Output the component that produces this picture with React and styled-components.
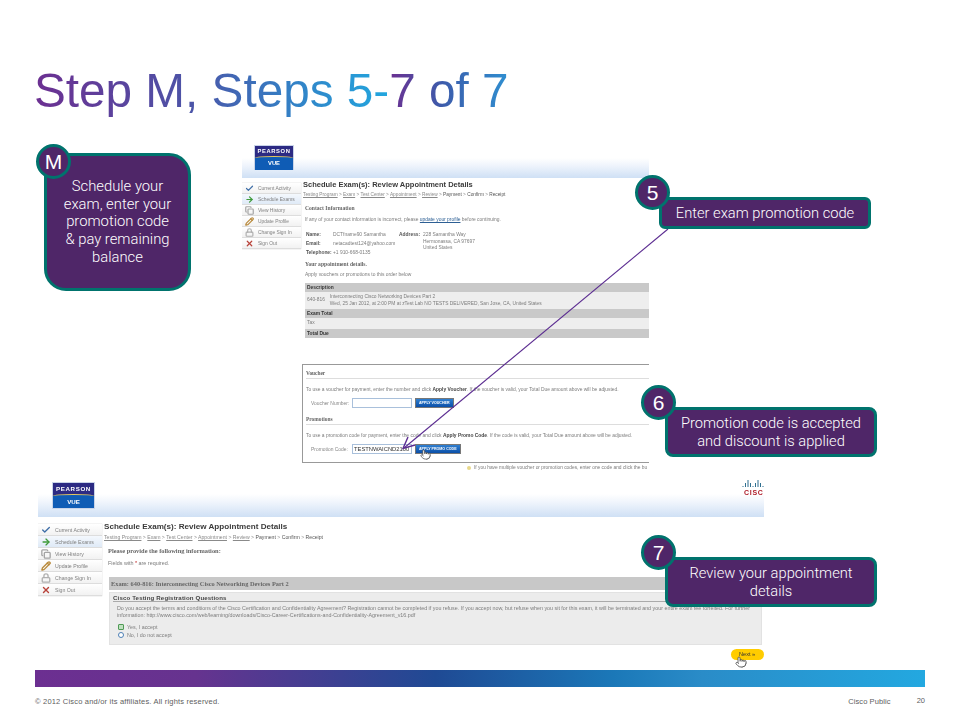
import React from "react";
import styled, { createGlobalStyle } from "styled-components";
import { Check, ArrowRight, Copy, Pencil, Lock, X, Pointer } from "lucide-react";

const GlobalStyle = createGlobalStyle`
  html, body { margin: 0; padding: 0; background: #fff; }
  body { font-family: "Liberation Sans", Arial, sans-serif; }
`;

const menu = [
  { label: "Current Activity", Icon: Check, color: "#3f6fa8" },
  { label: "Schedule Exams", Icon: ArrowRight, color: "#3f9a3a", active: true },
  { label: "View History", Icon: Copy, color: "#a5a5a5" },
  { label: "Update Profile", Icon: Pencil, color: "#b98a3c" },
  { label: "Change Sign In", Icon: Lock, color: "#b0b0b0" },
  { label: "Sign Out", Icon: X, color: "#b8433a" },
];

const Crumbs = ({ size }) => (
  <CrumbRow $size={size}>
    <u>Testing Program</u> &gt; <u>Exam</u> &gt; <u>Test Center</u> &gt; <u>Appointment</u> &gt;{" "}
    <u>Review</u> &gt; <b>Payment</b> &gt; <b>Confirm</b> &gt; <b>Receipt</b>
  </CrumbRow>
);

const SideMenu = ({ width, itemHeight, size, top }) => (
  <Menu $width={width} $top={top}>
    {menu.map(({ label, Icon, color, active }) => (
      <MenuItem key={label} $height={itemHeight} $size={size} $active={active}>
        <Icon size={itemHeight - 2} color={color} strokeWidth={3.2} />
        {label}
      </MenuItem>
    ))}
  </Menu>
);

const PearsonLogo = ({ width, height, size, top }) => (
  <Logo $width={width} $height={height} $top={top}>
    <LogoTop $size={size}>PEARSON</LogoTop>
    <LogoBottom $size={size}>VUE</LogoBottom>
  </Logo>
);

const App = () => (
  <Slide>
    <GlobalStyle />
    <Title>
      <TitleRun>Step M, Steps 5-</TitleRun>
      <TitleRun $short>7 of 7</TitleRun>
    </Title>

    <TopRow>
      <StepBox>
        <Badge>M</Badge>
        <span>
          Schedule your
          <br />
          exam, enter your
          <br />
          promotion code
          <br />
          &amp; pay remaining
          <br />
          balance
        </span>
      </StepBox>

      <ScreenOne>
        <Header $band={20} $left={12}>
          <PearsonLogo width={40} height={25} size={5.8} top={0} />
        </Header>
        <ScreenBody>
          <SideMenu width={59} itemHeight={11} size={4.9} top={5} />
          <Content>
            <PageTitle $size={7.5} $top={1}>Schedule Exam(s): Review Appointment Details</PageTitle>
            <Crumbs size={4.75} />
            <Indented>
              <SectionHead $top={5}>Contact Information</SectionHead>
              <Note $top={4}>
                If any of your contact information is incorrect, please{" "}
                <ProfileLink>update your profile</ProfileLink> before continuing.
              </Note>
              <Contact>
                <ContactColumn $columns="27px 66px" $row={9}>
                  <b>Name:</b>
                  <span>DCTfname90 Samantha</span>
                  <b>Email:</b>
                  <span>netacadtest124@yahoo.com</span>
                  <b>Telephone:</b>
                  <span>+1 910-668-0135</span>
                </ContactColumn>
                <ContactColumn $columns="24px 1fr" $row={6.6}>
                  <b>Address:</b>
                  <span>228 Samantha Way</span>
                  <span />
                  <span>Hermonassa, CA 97697</span>
                  <span />
                  <span>United States</span>
                </ContactColumn>
              </Contact>
              <SectionHead $top={3}>Your appointment details.</SectionHead>
              <Note>Apply vouchers or promotions to this order below</Note>
            </Indented>
            <Table>
              <TableHead>Description</TableHead>
              <TableCell $height={17}>
                <span>640-816</span>
                <span>
                  Interconnecting Cisco Networking Devices Part 2
                  <br />
                  Wed, 25 Jan 2012, at 2:00 PM at zTest Lab NO TESTS DELIVERED, San Jose, CA, United States
                </span>
              </TableCell>
              <TableHead>Exam Total</TableHead>
              <TableCell $height={11}>Tax</TableCell>
              <TableHead>Total Due</TableHead>
            </Table>
            <PayPanel>
              <PanelHead>Voucher</PanelHead>
              <PanelNote>
                To use a voucher for payment, enter the number and click <b>Apply Voucher</b>. If the voucher is valid,
                your Total Due amount above will be adjusted.
              </PanelNote>
              <FormRow>
                <FormLabel>Voucher Number:</FormLabel>
                <Field />
                <BlueButton>APPLY VOUCHER</BlueButton>
              </FormRow>
              <PanelHead $top={7}>Promotions</PanelHead>
              <PanelNote>
                To use a promotion code for payment, enter the code and click <b>Apply Promo Code</b>. If the code is
                valid, your Total Due amount above will be adjusted.
              </PanelNote>
              <FormRow>
                <FormLabel>Promotion Code:</FormLabel>
                <Field>TESTNWAICND2100</Field>
                <BlueButton>APPLY PROMO CODE</BlueButton>
              </FormRow>
            </PayPanel>
            <Hint>
              <HintBulb />
              If you have multiple voucher or promotion codes, enter one code and click the bu
            </Hint>
          </Content>
        </ScreenBody>
      </ScreenOne>
    </TopRow>

    <ScreenTwo>
      <Header $band={23} $left={14}>
        <PearsonLogo width={43} height={27} size={6.2} top={2} />
        <CiscoLogo>
          <svg width="22" height="9" viewBox="0 0 22 9">
            {[7, 4, 1, 4, 7, 4, 1, 4, 7].map((top, i) => (
              <rect key={i} x={i * 2.5 + 0.5} y={top} width="1" height={8 - top} fill="#2f6f8f" />
            ))}
          </svg>
          <CiscoWord>CISC</CiscoWord>
        </CiscoLogo>
      </Header>
      <ScreenBody>
        <SideMenu width={64} itemHeight={12} size={5.2} top={7} />
        <Content $left={2}>
          <PageTitle $size={8.1} $top={4}>Schedule Exam(s): Review Appointment Details</PageTitle>
          <Crumbs size={5.15} />
          <Indented $left={4}>
            <SectionHead $top={6} $size={6.4}>Please provide the following information:</SectionHead>
            <Note $top={4} $size={5.4}>
              Fields with <Star>*</Star> are required.
            </Note>
          </Indented>
          <ExamBar>Exam: 640-816: Interconnecting Cisco Networking Devices Part 2</ExamBar>
          <Questions>
            <QuestionHead>Cisco Testing Registration Questions</QuestionHead>
            <QuestionText>
              Do you accept the terms and conditions of the Cisco Certification and Confidentiality Agreement?
              Registration cannot be completed if you refuse. If you accept now, but refuse when you sit for this exam,
              it will be terminated and your entire exam fee forfeited. For further
              <br />
              information: http://www.cisco.com/web/learning/downloads/Cisco-Career-Certifications-and-Confidentiality-Agreement_v16.pdf
            </QuestionText>
            <Choice>
              <Radio $on />
              Yes, I accept
            </Choice>
            <Choice>
              <Radio />
              No, I do not accept
            </Choice>
          </Questions>
          <NextRow>
            <NextButton>Next »</NextButton>
          </NextRow>
        </Content>
      </ScreenBody>
    </ScreenTwo>

    <Band />
    <Footer>
      <Copyright>© 2012 Cisco and/or its affiliates. All rights reserved.</Copyright>
      <Classification>Cisco Public</Classification>
      <PageNumber>20</PageNumber>
    </Footer>

    <ArrowLayer width="960" height="720" viewBox="0 0 960 720">
      <line x1="668" y1="229" x2="404" y2="448" stroke="#5c2d91" strokeWidth="1.1" />
      <polyline points="415,445 403,448.5 408,437" fill="none" stroke="#5c2d91" strokeWidth="1.4" />
    </ArrowLayer>

    <Hand $x={420} $y={449}><Pointer size={11} strokeWidth={1.6} fill="#fff" /></Hand>
    <Hand $x={735} $y={656}><Pointer size={12} strokeWidth={1.6} fill="#fff" /></Hand>

    <Callout $x={659} $y={197} $w={212} $h={32} $radius={6}>
      <Badge $x={-27} $y={-25}>5</Badge>
      Enter exam promotion code
    </Callout>
    <Callout $x={665} $y={407} $w={212} $h={50} $radius={8}>
      <Badge $x={-27} $y={-25}>6</Badge>
      <span>
        Promotion code is accepted
        <br />
        and discount is applied
      </span>
    </Callout>
    <Callout $x={665} $y={557} $w={212} $h={50} $radius={8}>
      <Badge $x={-27} $y={-25}>7</Badge>
      <span>
        Review your appointment
        <br />
        details
      </span>
    </Callout>
  </Slide>
);

const Slide = styled.div`
  position: relative;
  width: 960px;
  height: 720px;
  overflow: hidden;
  display: flex;
  flex-direction: column;
  background: #fff;
`;

const Title = styled.h1`
  display: flex;
  height: 145px;
  box-sizing: border-box;
  margin: 0;
  padding: 63px 0 0 34px;
  font-size: 47.7px;
  line-height: 56px;
  font-weight: 400;
`;

const TitleRun = styled.span`
  white-space: pre;
  height: 60px;
  color: transparent;
  background: ${(p) =>
    p.$short
      ? "linear-gradient(90deg, #6c2f91 0%, #3c5cab 45%, #2f8ed0 100%)"
      : "linear-gradient(90deg, #6c2f91 0%, #4b55a8 45%, #3184c8 75%, #22a7df 100%)"};
  -webkit-background-clip: text;
  background-clip: text;
`;

const TopRow = styled.div`
  display: flex;
  align-items: flex-start;
  height: 335px;
  padding-left: 44px;
`;

const StepBox = styled.div`
  position: relative;
  flex: none;
  display: flex;
  justify-content: center;
  box-sizing: border-box;
  width: 147px;
  height: 138px;
  margin-top: 8px;
  padding-top: 22px;
  border: 3px solid #00736d;
  border-radius: 22px;
  background: #4f2668;
  color: #fff;
  font-family: "Roboto", "Liberation Sans", sans-serif;
  font-weight: 300;
  font-size: 14.8px;
  line-height: 17.7px;
  text-align: center;
`;

const Badge = styled.span`
  position: absolute;
  left: ${(p) => p.$x ?? -11}px;
  top: ${(p) => p.$y ?? -12}px;
  box-sizing: border-box;
  display: flex;
  align-items: center;
  justify-content: center;
  width: 35px;
  height: 35px;
  border: 3px solid #00736d;
  border-radius: 50%;
  background: #4f2668;
  color: #fff;
  font-family: "Liberation Sans", sans-serif;
  font-size: 21px;
`;

const Callout = styled.div`
  position: absolute;
  left: ${(p) => p.$x}px;
  top: ${(p) => p.$y}px;
  width: ${(p) => p.$w}px;
  height: ${(p) => p.$h}px;
  box-sizing: border-box;
  display: flex;
  align-items: center;
  justify-content: center;
  padding: 0 6px;
  border: 3px solid #00736d;
  border-radius: ${(p) => p.$radius}px;
  background: #4f2668;
  color: #fff;
  font-family: "Roboto", "Liberation Sans", sans-serif;
  font-weight: 300;
  font-size: 14.7px;
  line-height: 18px;
  text-align: center;
  white-space: nowrap;
`;

const ScreenOne = styled.div`
  flex: none;
  width: 407px;
  margin-left: 51px;
  height: 335px;
  overflow: hidden;
  filter: blur(0.45px);
`;

const ScreenTwo = styled.div`
  flex: none;
  width: 726px;
  height: 190px;
  margin-left: 38px;
  overflow: hidden;
  filter: blur(0.45px);
`;

const Header = styled.div`
  display: flex;
  justify-content: space-between;
  align-items: flex-start;
  padding: 0 0 8px ${(p) => p.$left}px;
  background: linear-gradient(180deg, #fff 0%, #f0f5fc 35%, #cfe0f5 100%) no-repeat bottom / 100% ${(p) => p.$band}px;
`;

const Logo = styled.div`
  display: flex;
  flex-direction: column;
  width: ${(p) => p.$width}px;
  height: ${(p) => p.$height}px;
  margin-top: ${(p) => p.$top}px;
  box-sizing: border-box;
  border: 1px solid #c9d4e8;
  background: #2c2a83;
`;

const LogoTop = styled.div`
  flex: none;
  height: 44%;
  color: #fff;
  font-weight: 700;
  font-size: ${(p) => p.$size}px;
  line-height: 11px;
  letter-spacing: 0.6px;
  text-align: center;
  white-space: nowrap;
`;

const LogoBottom = styled.div`
  flex: 1;
  background: #0f5cb5;
  border-top: 1px solid #e5c860;
  border-radius: 50% 50% 0 0 / 2px 2px 0 0;
  color: #fff;
  font-weight: 700;
  font-size: ${(p) => p.$size}px;
  line-height: 13px;
  text-align: center;
`;

const CiscoLogo = styled.div`
  display: flex;
  flex-direction: column;
  align-items: flex-start;
  width: 22px;
  margin-top: -1px;
`;

const CiscoWord = styled.span`
  margin: 1px 0 0 2px;
  color: #b0202c;
  font-size: 7px;
  font-weight: 700;
  line-height: 7px;
  letter-spacing: 0.7px;
`;

const ScreenBody = styled.div`
  display: flex;
  align-items: flex-start;
`;

const Menu = styled.div`
  flex: none;
  width: ${(p) => p.$width}px;
  margin-top: ${(p) => p.$top}px;
  box-shadow: 0 0 1px #bbb;
`;

const MenuItem = styled.div`
  display: flex;
  align-items: center;
  gap: 4px;
  height: ${(p) => p.$height}px;
  box-sizing: border-box;
  padding-left: 3px;
  border-bottom: 1px solid #ddd;
  background: ${(p) => (p.$active ? "linear-gradient(180deg, #f4f8fd, #dfeaf7)" : "linear-gradient(180deg, #fff, #f2f2f2)")};
  color: #808080;
  font-size: ${(p) => p.$size}px;
  white-space: nowrap;
`;

const Content = styled.div`
  flex: 1;
  min-width: 0;
  padding-left: ${(p) => p.$left ?? 2}px;
  color: #7c7c7c;
`;

const PageTitle = styled.div`
  margin-top: ${(p) => p.$top ?? 2}px;
  color: #3a3a3a;
  font-size: ${(p) => p.$size}px;
  font-weight: 700;
  line-height: 11px;
  white-space: nowrap;
`;

const CrumbRow = styled.div`
  margin-top: 1px;
  font-size: ${(p) => p.$size}px;
  line-height: 8px;
  color: #8a8a8a;
  white-space: nowrap;

  b {
    font-weight: 400;
    color: #555;
  }
`;

const Indented = styled.div`
  padding-left: ${(p) => p.$left ?? 2}px;
`;

const SectionHead = styled.div`
  margin-top: ${(p) => p.$top ?? 5}px;
  color: #666;
  font-family: "Liberation Serif", serif;
  font-size: ${(p) => p.$size ?? 5.6}px;
  font-weight: 700;
  line-height: 8px;
  white-space: nowrap;
`;

const Note = styled.div`
  margin-top: ${(p) => p.$top ?? 3}px;
  font-size: ${(p) => p.$size ?? 4.93}px;
  line-height: 8px;
  white-space: nowrap;
`;

const ProfileLink = styled.span`
  color: #2d5f94;
  text-decoration: underline;
`;

const Contact = styled.div`
  display: flex;
  margin: 6px 0 0 1px;
`;

const ContactColumn = styled.div`
  display: grid;
  grid-template-columns: ${(p) => p.$columns};
  grid-auto-rows: ${(p) => p.$row}px;
  font-size: 4.9px;
  line-height: 9px;
  white-space: nowrap;

  b {
    color: #555;
  }
`;

const Table = styled.div`
  margin: 4px 0 0 2px;
  font-size: 4.86px;
`;

const TableHead = styled.div`
  height: 9px;
  padding-left: 2px;
  background: #c9c9c9;
  color: #333;
  font-weight: 700;
  line-height: 9px;
`;

const TableCell = styled.div`
  display: flex;
  gap: 5px;
  align-items: center;
  height: ${(p) => p.$height}px;
  padding-left: 2px;
  background: #eee;
  line-height: 6.5px;
  white-space: nowrap;
`;

const PayPanel = styled.div`
  box-sizing: border-box;
  height: 99px;
  margin: 26px -10px 0 -1px;
  padding: 4px 3px 0;
  border: 1px solid #999;
  font-size: 4.92px;
  white-space: nowrap;
`;

const PanelHead = styled.div`
  margin-top: ${(p) => p.$top ?? 0}px;
  padding-bottom: 1px;
  border-bottom: 1px solid #ddd;
  color: #666;
  font-family: "Liberation Serif", serif;
  font-size: 5.4px;
  font-weight: 700;
  line-height: 8px;
`;

const PanelNote = styled.div`
  margin-top: 7px;
  line-height: 7px;

  b {
    color: #444;
  }
`;

const FormRow = styled.div`
  display: flex;
  align-items: center;
  height: 10px;
  margin-top: 5px;
`;

const FormLabel = styled.div`
  width: 46px;
  padding-left: 5px;
  box-sizing: border-box;
  color: #888;
`;

const Field = styled.div`
  box-sizing: border-box;
  width: 60px;
  height: 10px;
  margin-right: 3px;
  padding-left: 1px;
  border: 1px solid #a9c0db;
  background: #fff;
  color: #333;
  font-size: 5.8px;
  line-height: 8px;
  white-space: nowrap;
`;

const BlueButton = styled.div`
  padding: 0 3px;
  height: 8px;
  background: linear-gradient(180deg, #2f7fd0, #0b4fa8);
  border: 0.5px solid #777;
  color: #fff;
  font-size: 3.6px;
  font-weight: 700;
  line-height: 8px;
`;

const Hint = styled.div`
  display: flex;
  align-items: center;
  gap: 3px;
  height: 9px;
  margin: 0 0 0 164px;
  font-size: 4.85px;
  white-space: nowrap;
`;

const HintBulb = styled.span`
  flex: none;
  width: 4px;
  height: 4px;
  border-radius: 50%;
  background: #e8d88a;
`;

const Star = styled.span`
  color: #c02020;
`;

const ExamBar = styled.div`
  height: 13px;
  margin: 10px 1px 0 5px;
  padding-left: 2px;
  background: #c8c8c8;
  color: #666;
  font-family: "Liberation Serif", serif;
  font-size: 6.35px;
  font-weight: 700;
  line-height: 13px;
`;

const Questions = styled.div`
  box-sizing: border-box;
  height: 53px;
  margin: 2px 2px 0 5px;
  padding: 1px 3px 0;
  background: #ececec;
  border: 1px solid #e2e2e2;
  font-size: 5.35px;
  white-space: nowrap;
`;

const QuestionHead = styled.div`
  border-bottom: 1px solid #aaa;
  color: #444;
  font-size: 6.1px;
  font-weight: 700;
  letter-spacing: 0.15px;
  line-height: 7px;
`;

const QuestionText = styled.div`
  margin: 3px 0 4px 4px;
  line-height: 7px;
  overflow: hidden;
`;

const Choice = styled.div`
  display: flex;
  align-items: center;
  gap: 3px;
  height: 8px;
  margin-left: 5px;
`;

const Radio = styled.span`
  flex: none;
  box-sizing: border-box;
  width: 6px;
  height: 6px;
  border-radius: ${(p) => (p.$on ? "1px" : "50%")};
  border: 1px solid ${(p) => (p.$on ? "#4f9a55" : "#4d7fb5")};
  background: ${(p) => (p.$on ? "#bfe0bf" : "#fff")};
`;

const NextRow = styled.div`
  display: flex;
  justify-content: flex-end;
  margin-top: 4px;
`;

const NextButton = styled.div`
  width: 33px;
  height: 11px;
  box-sizing: border-box;
  padding-left: 8px;
  border-radius: 6px;
  background: #fc0;
  color: #333;
  font-size: 5.6px;
  line-height: 11px;
`;

const Band = styled.div`
  flex: none;
  height: 17px;
  margin: 0 35px;
  background: linear-gradient(90deg, #6c2f91 0%, #66338f 18%, #1f4a94 45%, #1b78b8 65%, #2a8cc8 75%, #23a8e0 100%);
`;

const Footer = styled.div`
  display: flex;
  align-items: center;
  height: 27px;
  margin: 0 35px;
  padding-top: 1px;
  box-sizing: border-box;
  color: #5e5e5e;
  font-size: 7.5px;
`;

const Copyright = styled.span`
  flex: 1;
  letter-spacing: 0.2px;
`;

const Classification = styled.span`
  margin-right: 26px;
  letter-spacing: 0.1px;
`;

const PageNumber = styled.span`
  margin-top: -2px;
`;

const ArrowLayer = styled.svg`
  position: absolute;
  inset: 0;
  pointer-events: none;
`;

const Hand = styled.span`
  position: absolute;
  left: ${(p) => p.$x}px;
  top: ${(p) => p.$y}px;
  display: flex;
  color: #444;
`;

export default App;
